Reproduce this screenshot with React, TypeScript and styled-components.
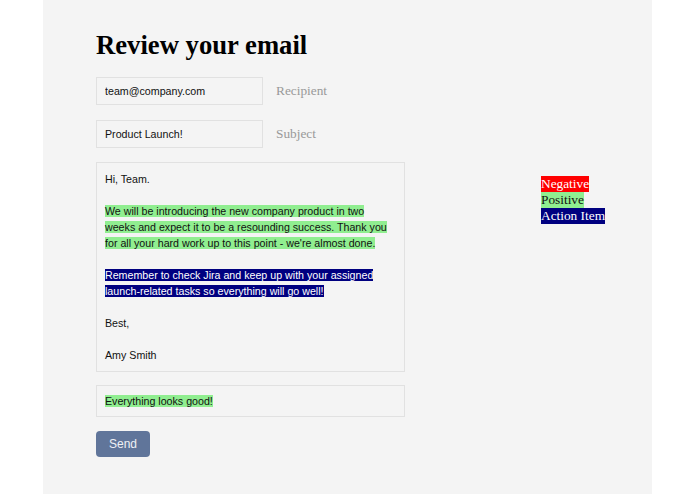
import React from "react";
import styled, { createGlobalStyle } from "styled-components";

const Global = createGlobalStyle`
  html, body { margin: 0; padding: 0; background: #ffffff; }
  * { box-sizing: border-box; }
`;

const Panel = styled.main`
  margin-left: 43px;
  width: 609px;
  min-height: 494px;
  background: #f4f4f4;
  padding: 30px 53px 0;
`;

const Title = styled.h1`
  margin: 0 0 17px;
  font-family: "Liberation Serif", "Times New Roman", serif;
  font-weight: bold;
  font-size: 26.67px;
  line-height: 30px;
  color: #000;
`;

const FieldRow = styled.div<{ $gap: number }>`
  display: flex;
  align-items: center;
  margin-bottom: ${(p) => p.$gap}px;
`;

const TextInput = styled.input`
  width: 167px;
  height: 28px;
  padding: 0 8px;
  border: 1px solid #e1e1e1;
  background: #f4f4f4;
  font-family: "Liberation Sans", Arial, sans-serif;
  font-size: 10.67px;
  color: #111;
  outline: none;
`;

const FieldLabel = styled.span`
  margin-left: 13px;
  font-family: "Liberation Serif", "Times New Roman", serif;
  font-size: 13.33px;
  color: #999;
`;

const Row = styled.div`
  display: flex;
  align-items: flex-start;
  gap: 136px;
`;

const Box = styled.div<{ $pad: number }>`
  flex: 0 0 auto;
  width: 309px;
  border: 1px solid #e1e1e1;
  padding: ${(p) => p.$pad}px 8px;
  font-family: "Liberation Sans", Arial, sans-serif;
  font-size: 10.67px;
  line-height: 16px;
  color: #111;
`;

const Para = styled.p`
  margin: 0 0 16px;
  &:last-child { margin-bottom: 0; }
`;

const Mark = styled.span<{ $kind: "pos" | "neg" | "action" }>`
  background: ${(p) =>
    p.$kind === "pos" ? "#90ee90" : p.$kind === "neg" ? "#ff0000" : "#000080"};
  color: ${(p) => (p.$kind === "pos" ? "#111" : "#ffffff")};
`;

const Legend = styled.div`
  flex: 0 0 auto;
  margin-top: 14px;
  display: flex;
  flex-direction: column;
  align-items: flex-start;
  white-space: nowrap;
  font-family: "Liberation Serif", "Times New Roman", serif;
  font-size: 13.33px;
`;

const Feedback = styled(Box)`
  margin-top: 13px;
`;

const SendButton = styled.button`
  margin-top: 14px;
  width: 54px;
  height: 26px;
  border: none;
  border-radius: 4px;
  background: #60759a;
  color: #eef0f5;
  font-family: "Liberation Sans", Arial, sans-serif;
  font-size: 12px;
  cursor: pointer;
`;

export default function App() {
  return (
    <>
      <Global />
      <Panel>
        <Title>Review your email</Title>
        <FieldRow $gap={15}>
          <TextInput defaultValue="team@company.com" />
          <FieldLabel>Recipient</FieldLabel>
        </FieldRow>
        <FieldRow $gap={14}>
          <TextInput defaultValue="Product Launch!" />
          <FieldLabel>Subject</FieldLabel>
        </FieldRow>
        <Row>
          <Box $pad={8}>
            <Para>Hi, Team.</Para>
            <Para>
              <Mark $kind="pos">
                We will be introducing the new company product in two
                <br />
                weeks and expect it to be a resounding success. Thank you
                <br />
                for all your hard work up to this point - we're almost done.
              </Mark>
            </Para>
            <Para>
              <Mark $kind="action">
                Remember to check Jira and keep up with your assigned
                <br />
                launch-related tasks so everything will go well!
              </Mark>
            </Para>
            <Para>Best,</Para>
            <Para>Amy Smith</Para>
          </Box>
          <Legend>
            <Mark $kind="neg">Negative</Mark>
            <Mark $kind="pos">Positive</Mark>
            <Mark $kind="action">Action Item</Mark>
          </Legend>
        </Row>
        <Feedback $pad={7}>
          <Mark $kind="pos">Everything looks good!</Mark>
        </Feedback>
        <SendButton>Send</SendButton>
      </Panel>
    </>
  );
}
